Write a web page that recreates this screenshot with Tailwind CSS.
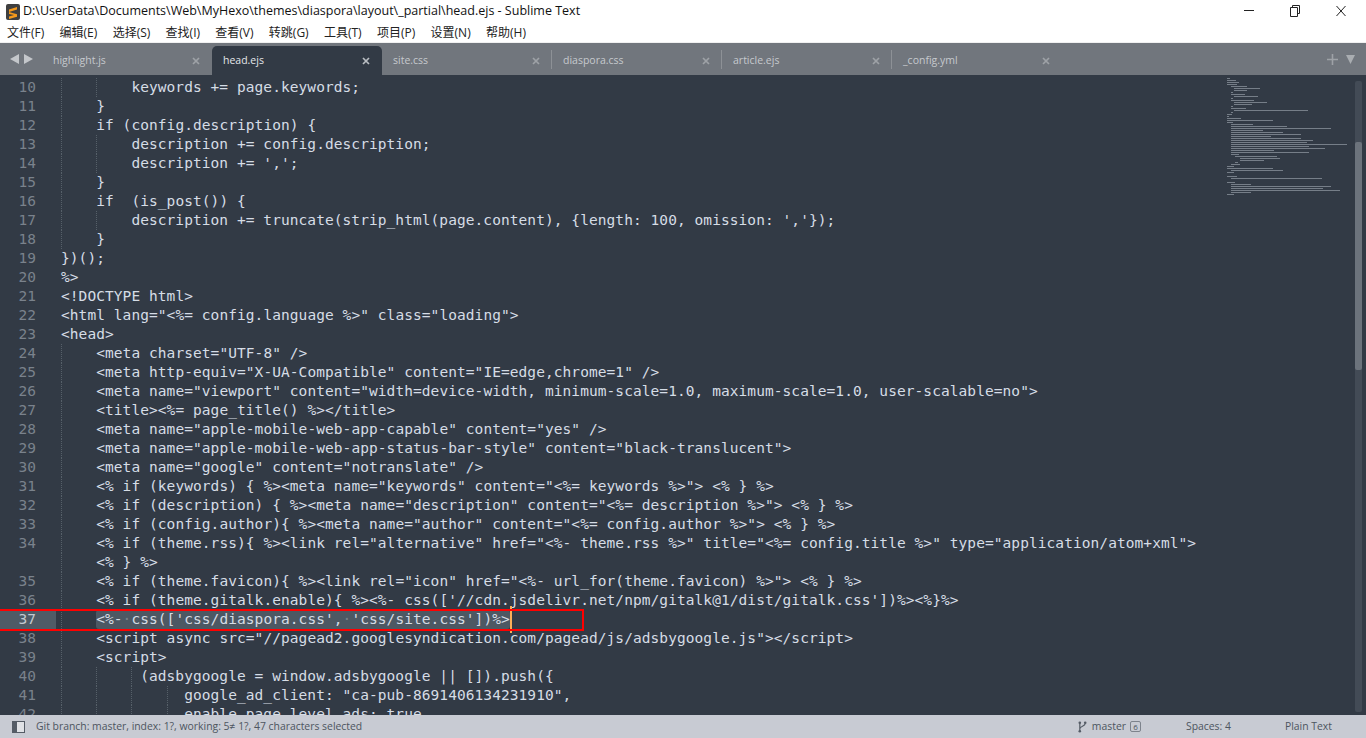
<!DOCTYPE html>
<html lang="zh">
<head>
<meta charset="utf-8">
<title>head.ejs - Sublime Text</title>
<script src="https://cdn.jsdelivr.net/npm/@tailwindcss/browser@4"></script>
</head>
<body class="h-[738px] w-[1366px] overflow-hidden bg-white font-['Open_Sans','Noto_Sans_CJK_SC',sans-serif]">
<div class="flex h-[738px] flex-col">
  <!-- title bar -->
  <header class="flex h-[22px] shrink-0 items-center pl-[6px] pt-[1px] text-[12.5px] text-[#111]">
    <svg class="mr-[3px] shrink-0" width="14" height="16" viewBox="0 0 14 16"><rect width="14" height="16" rx="2" fill="#3f3f3f"/><path d="M3 5.5 11 3v2.6L3 8.1zM3 8 11 10.2v2.6L3 15v-2.4l5-1.7-5-1z" fill="#f59a1c"/></svg>
    <span class="whitespace-pre">D:\UserData\Documents\Web\MyHexo\themes\diaspora\layout\_partial\head.ejs - Sublime Text</span>
    <div class="ml-auto -mt-[2px] flex pr-[20px]">
      <svg width="10" height="12" viewBox="0 0 10 12" class="mr-[36px]"><path d="M0 5.5h10" stroke="#222" stroke-width="1"/></svg>
      <svg width="10" height="12" viewBox="0 0 10 12" class="mr-[36px]"><path d="M2.5 2.5V.5h7v8h-2M.5 2.5h7v9h-7z" fill="none" stroke="#222"/></svg>
      <svg width="10" height="12" viewBox="0 0 10 12"><path d="M.5 1l9 10M9.5 1l-9 10" stroke="#222" fill="none"/></svg>
    </div>
  </header>
  <!-- menu -->
  <nav class="flex h-[21px] shrink-0 items-center gap-[15.3px] border-b border-[#f0f0f0] pl-[7px] pt-[1px] text-[12px] text-[#222]">
    <span>文件(F)</span><span>编辑(E)</span><span>选择(S)</span><span>查找(I)</span><span>查看(V)</span><span>转跳(G)</span><span>工具(T)</span><span>项目(P)</span><span>设置(N)</span><span>帮助(H)</span>
  </nav>
  <!-- tabs -->
  <div class="flex h-[32px] shrink-0 items-end bg-[#71767d] text-[10.5px] text-[#c6c9cd]">
    <div class="flex h-[29px] w-[42px] shrink-0 items-center gap-[5px] pb-[3px] pl-[10px]">
      <svg width="9" height="10" viewBox="0 0 9 10"><path d="M0 5 9 0v10z" fill="#c4c7cb"/></svg>
      <svg width="9" height="10" viewBox="0 0 9 10"><path d="M9 5 0 0v10z" fill="#c4c7cb"/></svg>
    </div>
    <div class="flex h-[29px] w-[170px] shrink-0 items-center justify-between pl-[11px] pr-[12px]"><span>highlight.js</span><svg width="8" height="8" viewBox="0 0 8 8"><path d="M1 1l6 6M7 1 1 7" stroke="#9ea2a7" stroke-width="1.7"/></svg></div>
    <div class="flex h-[29px] w-[170px] shrink-0 items-center justify-between rounded-t-[5px] bg-[#323a45] pl-[11px] pr-[12px] text-[#e4e6e9]"><span>head.ejs</span><svg width="8" height="8" viewBox="0 0 8 8"><path d="M1 1l6 6M7 1 1 7" stroke="#b9bdc2" stroke-width="1.7"/></svg></div>
    <div class="flex h-[29px] w-[170px] shrink-0 items-center justify-between pl-[11px] pr-[12px]"><span>site.css</span><svg width="8" height="8" viewBox="0 0 8 8"><path d="M1 1l6 6M7 1 1 7" stroke="#9ea2a7" stroke-width="1.7"/></svg></div>
    <div class="relative flex h-[29px] w-[170px] shrink-0 items-center justify-between pl-[11px] pr-[12px]"><i class="absolute left-[-1px] top-[4px] h-[19px] w-px bg-[#8d9196]"></i><span>diaspora.css</span><svg width="8" height="8" viewBox="0 0 8 8"><path d="M1 1l6 6M7 1 1 7" stroke="#9ea2a7" stroke-width="1.7"/></svg></div>
    <div class="relative flex h-[29px] w-[170px] shrink-0 items-center justify-between pl-[11px] pr-[12px]"><i class="absolute left-[-1px] top-[4px] h-[19px] w-px bg-[#8d9196]"></i><span>article.ejs</span><svg width="8" height="8" viewBox="0 0 8 8"><path d="M1 1l6 6M7 1 1 7" stroke="#9ea2a7" stroke-width="1.7"/></svg></div>
    <div class="relative flex h-[29px] w-[170px] shrink-0 items-center justify-between pl-[11px] pr-[12px]"><i class="absolute left-[-1px] top-[4px] h-[19px] w-px bg-[#8d9196]"></i><span>_config.yml</span><svg width="8" height="8" viewBox="0 0 8 8"><path d="M1 1l6 6M7 1 1 7" stroke="#9ea2a7" stroke-width="1.7"/></svg></div>
    <div class="ml-auto flex h-[29px] items-center gap-[8px] pb-[3px] pr-[11px]">
      <svg width="11" height="11" viewBox="0 0 11 11"><path d="M5.5 0v11M0 5.5h11" stroke="#9ea2a7" stroke-width="1.6"/></svg>
      <svg width="9" height="9" viewBox="0 0 9 9"><path d="M0 0h9L4.5 9z" fill="#a9adb1"/></svg>
    </div>
  </div>
  <!-- editor -->
  <main class="relative flex min-h-0 flex-1 overflow-hidden bg-[#323a45]">
    <div class="min-w-0 flex-1 pt-[3px] font-['DejaVu_Sans_Mono','Liberation_Mono',monospace] text-[14.5px] leading-[19px] tracking-[0.07px] text-[#d6dde6] [&_b]:w-[61px] [&_b]:shrink-0 [&_b]:pr-[25px] [&_b]:text-right [&_b]:font-normal [&_b]:text-[#7a828c] [&_i]:inline-block [&_i]:h-[19px] [&_i]:w-[35.2px] [&_i]:border-l [&_i]:border-dotted [&_i]:border-[#566069] [&_i]:align-top [&>div]:flex [&>div]:h-[19px] [&>div]:whitespace-pre">
<div><b>10</b><span><i></i><i></i>keywords += page.keywords;</span></div>
<div><b>11</b><span><i></i>}</span></div>
<div><b>12</b><span><i></i>if (config.description) {</span></div>
<div><b>13</b><span><i></i><i></i>description += config.description;</span></div>
<div><b>14</b><span><i></i><i></i>description += ',';</span></div>
<div><b>15</b><span><i></i>}</span></div>
<div><b>16</b><span><i></i>if  (is_post()) {</span></div>
<div><b>17</b><span><i></i><i></i>description += truncate(strip_html(page.content), {length: 100, omission: ','});</span></div>
<div><b>18</b><span><i></i>}</span></div>
<div><b>19</b><span>})();</span></div>
<div><b>20</b><span>%&gt;</span></div>
<div><b>21</b><span>&lt;!DOCTYPE html&gt;</span></div>
<div><b>22</b><span>&lt;html lang="&lt;%= config.language %&gt;" class="loading"&gt;</span></div>
<div><b>23</b><span>&lt;head&gt;</span></div>
<div><b>24</b><span><i></i>&lt;meta charset="UTF-8" /&gt;</span></div>
<div><b>25</b><span><i></i>&lt;meta http-equiv="X-UA-Compatible" content="IE=edge,chrome=1" /&gt;</span></div>
<div><b>26</b><span><i></i>&lt;meta name="viewport" content="width=device-width, minimum-scale=1.0, maximum-scale=1.0, user-scalable=no"&gt;</span></div>
<div><b>27</b><span><i></i>&lt;title&gt;&lt;%= page_title() %&gt;&lt;/title&gt;</span></div>
<div><b>28</b><span><i></i>&lt;meta name="apple-mobile-web-app-capable" content="yes" /&gt;</span></div>
<div><b>29</b><span><i></i>&lt;meta name="apple-mobile-web-app-status-bar-style" content="black-translucent"&gt;</span></div>
<div><b>30</b><span><i></i>&lt;meta name="google" content="notranslate" /&gt;</span></div>
<div><b>31</b><span><i></i>&lt;% if (keywords) { %&gt;&lt;meta name="keywords" content="&lt;%= keywords %&gt;"&gt; &lt;% } %&gt;</span></div>
<div><b>32</b><span><i></i>&lt;% if (description) { %&gt;&lt;meta name="description" content="&lt;%= description %&gt;"&gt; &lt;% } %&gt;</span></div>
<div><b>33</b><span><i></i>&lt;% if (config.author){ %&gt;&lt;meta name="author" content="&lt;%= config.author %&gt;"&gt; &lt;% } %&gt;</span></div>
<div><b>34</b><span><i></i>&lt;% if (theme.rss){ %&gt;&lt;link rel="alternative" href="&lt;%- theme.rss %&gt;" title="&lt;%= config.title %&gt;" type="application/atom+xml"&gt;</span></div>
<div><b></b><span><i></i>&lt;% } %&gt;</span></div>
<div><b>35</b><span><i></i>&lt;% if (theme.favicon){ %&gt;&lt;link rel="icon" href="&lt;%- url_for(theme.favicon) %&gt;"&gt; &lt;% } %&gt;</span></div>
<div><b>36</b><span><i></i>&lt;% if (theme.gitalk.enable){ %&gt;&lt;%- css(['//cdn.jsdelivr.net/npm/gitalk@1/dist/gitalk.css'])%&gt;&lt;%}%&gt;</span></div>
<div class="relative"><b class="bg-[linear-gradient(90deg,#4f5b66_0,#4f5b66_56px,transparent_56px)] !text-[#c3c9d0]">37</b><span><i></i><span class="inline-block h-[19px] rounded-[3px] bg-[#4d5863] align-top">&lt;%-<span class="text-[#76808a]">·</span>css(['css/diaspora.css',<span class="text-[#76808a]">·</span>'css/site.css'])%&gt;</span></span><u class="absolute left-[510px] top-[-4px] h-[27px] w-[2px] bg-[#f9ae58]"></u></div>
<div><b>38</b><span><i></i>&lt;script async src="//pagead2.googlesyndication.com/pagead/js/adsbygoogle.js"&gt;&lt;/script&gt;</span></div>
<div><b>39</b><span><i></i>&lt;script&gt;</span></div>
<div><b>40</b><span><i></i><i></i><i class="!w-[8.8px]"></i>(adsbygoogle = window.adsbygoogle || []).push({</span></div>
<div><b>41</b><span><i></i><i></i><i></i><i class="!w-[17.6px]"></i>google_ad_client: "ca-pub-8691406134231910",</span></div>
<div><b>42</b><span><i></i><i></i><i></i><i class="!w-[17.6px]"></i>enable_page_level_ads: true</span></div>
    </div>
    <!-- minimap -->
    <svg class="shrink-0" width="128" height="640" viewBox="1227 75 128 640">
      <path fill="none" stroke="#a3acb6" stroke-width="1.2" opacity=".6" transform="translate(0 .5)" d="M1227 78h3M1227 80h9M1227 82h12M1227 84h10M1231 86h16M1234 88h26M1234 90h13M1231 92h2M1231 94h14M1234 96h24M1231 98h2M1231 100h23M1234 102h33M1234 104h18M1231 106h2M1231 108h15M1234 110h74M1231 112h2M1227 114h5M1227 116h2M1227 118h14M1227 120h46M1227 122h6M1231 124h22M1231 126h56M1231 128h100M1231 130h32M1231 132h52M1231 134h70M1231 136h40M1231 138h70M1231 140h82M1231 142h76M1231 144h116M1231 146h78M1231 148h94M1231 150h43M1231 152h78M1231 154h8M1235 156h42M1240 158h40M1240 160h24M1235 162h3M1231 164h9M1227 166h7M1227 168h46M1231 170h52M1227 172h7M1227 176h10M1231 178h91M1227 182h8M1231 184h20M1231 186h100M1231 188h92M1231 190h109M1231 192h20M1227 194h7"/>
    </svg>
    <!-- scrollbar -->
    <div class="mb-[3px] mr-[4px] mt-[6px] w-[7px] shrink-0 overflow-hidden rounded-[2px] bg-[#434b56] pt-[61px]">
      <div class="h-[228px] rounded-[2px] bg-[#6c737c]"></div>
    </div>
    <!-- red annotation -->
    <div class="absolute left-[-2px] top-[534px] h-[22px] w-[586px] border-2 border-[#ff0000]"></div>
  </main>
  <!-- status bar -->
  <footer class="flex h-[23px] shrink-0 items-center bg-[#c8cbd3] text-[10.4px] text-[#4d5560]">
    <svg class="ml-[12px] mr-[11px]" width="13" height="12" viewBox="0 0 13 12"><rect x=".5" y=".5" width="12" height="11" fill="#e0e2e6" stroke="#555c66"/><rect x="1" y="1" width="4" height="10" fill="#555c66"/></svg>
    <span>Git branch: master, index: 1?, working: 5≠ 1?, 47 characters selected</span>
    <svg class="ml-auto" width="9" height="12" viewBox="0 0 9 12"><circle cx="1.8" cy="1.8" r="1.3" fill="#555c66"/><circle cx="1.8" cy="10.2" r="1.3" fill="#555c66"/><circle cx="7.2" cy="1.8" r="1.3" fill="#555c66"/><path d="M1.8 2v8M7.2 2.5C7.2 5.5 1.8 5 1.8 8" stroke="#555c66" fill="none" stroke-width="1.2"/></svg>
    <span class="ml-[5px]">master</span>
    <span class="ml-[4px] flex h-[11px] w-[11px] items-center justify-center rounded-[2px] border border-[#7d838c] text-[8px]">6</span>
    <span class="ml-[45px]">Spaces: 4</span>
    <span class="ml-[54px] mr-[34px]">Plain Text</span>
  </footer>
</div>
</body>
</html>
